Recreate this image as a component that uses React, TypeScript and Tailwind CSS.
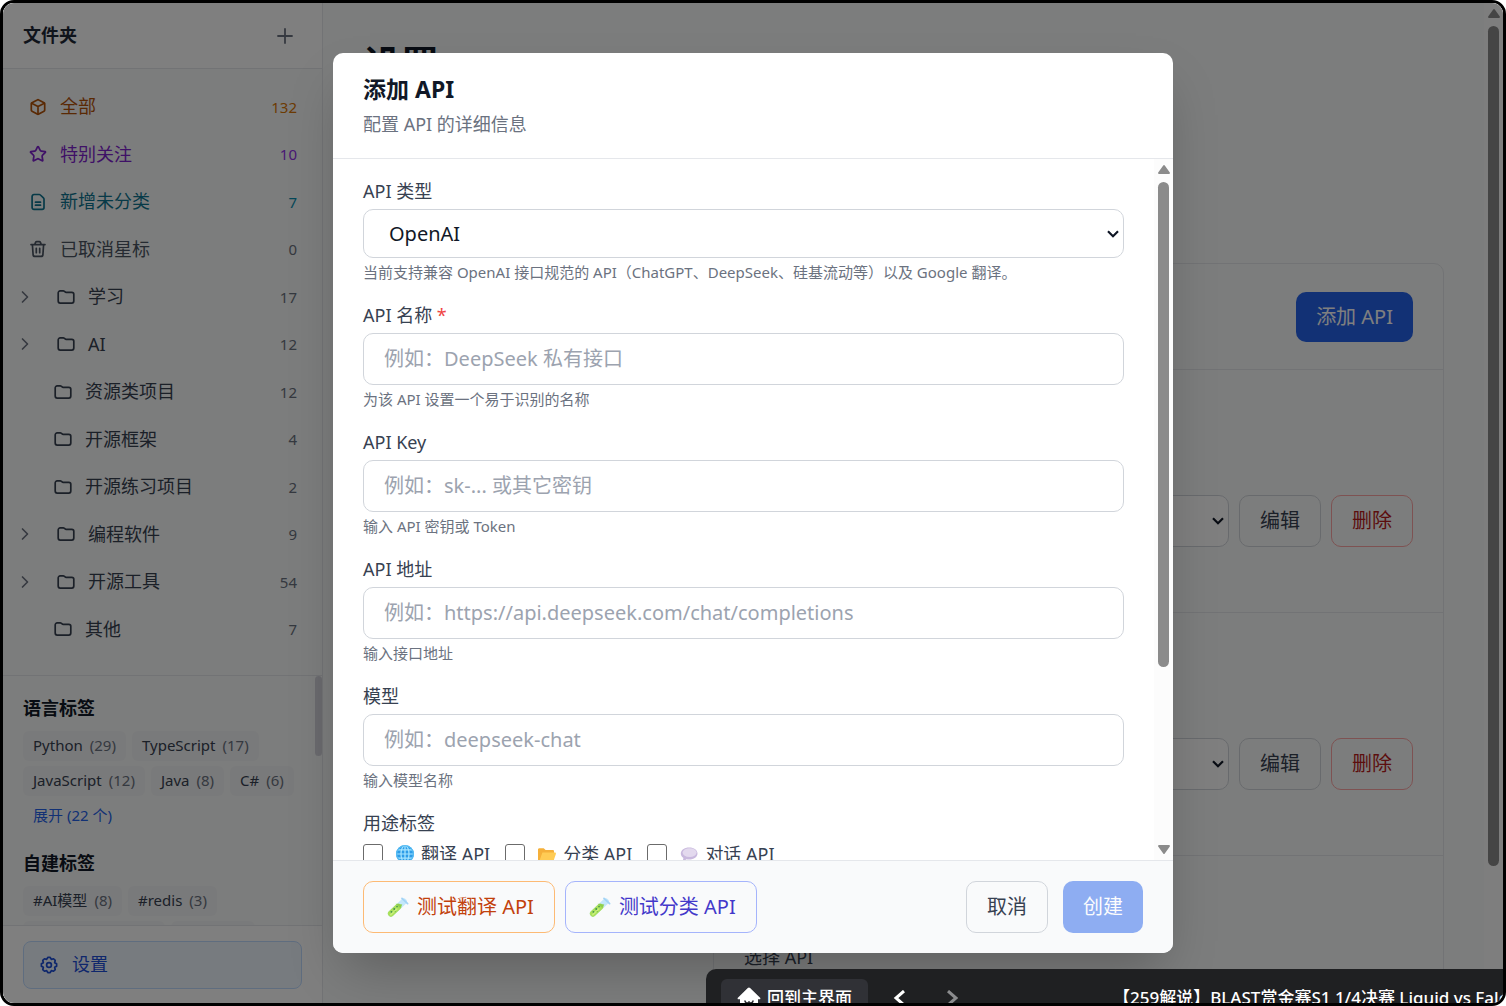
import { useState } from 'react';
import type { ReactNode } from 'react';
import { ChevronRight, Plus, Star } from 'lucide-react';

interface NavItem {
  name: string;
  count: number;
  kind: 'all' | 'star' | 'new' | 'trash' | 'parent' | 'leaf';
}

const NAV: NavItem[] = [
  { name: '全部', count: 132, kind: 'all' },
  { name: '特别关注', count: 10, kind: 'star' },
  { name: '新增未分类', count: 7, kind: 'new' },
  { name: '已取消星标', count: 0, kind: 'trash' },
  { name: '学习', count: 17, kind: 'parent' },
  { name: 'AI', count: 12, kind: 'parent' },
  { name: '资源类项目', count: 12, kind: 'leaf' },
  { name: '开源框架', count: 4, kind: 'leaf' },
  { name: '开源练习项目', count: 2, kind: 'leaf' },
  { name: '编程软件', count: 9, kind: 'parent' },
  { name: '开源工具', count: 54, kind: 'parent' },
  { name: '其他', count: 7, kind: 'leaf' },
];

const COLORS: Record<NavItem['kind'], { text: string; count: string }> = {
  all: { text: 'text-[#b45309]', count: 'text-[#d97706]' },
  star: { text: 'text-[#7e22ce]', count: 'text-[#9333ea]' },
  new: { text: 'text-[#0e7490]', count: 'text-[#0891b2]' },
  trash: { text: 'text-[#4b5563]', count: 'text-[#6b7280]' },
  parent: { text: 'text-[#374151]', count: 'text-[#6b7280]' },
  leaf: { text: 'text-[#374151]', count: 'text-[#6b7280]' },
};

const LANGUAGE_TAGS = [
  { name: 'Python', count: 29 },
  { name: 'TypeScript', count: 17 },
  { name: 'JavaScript', count: 12 },
  { name: 'Java', count: 8 },
  { name: 'C#', count: 6 },
];

const CUSTOM_TAGS = [
  { name: '#AI模型', count: 8 },
  { name: '#redis', count: 3 },
];

const FIELDS = [
  { id: 'name', label: 'API 名称', required: true, placeholder: '例如：DeepSeek 私有接口', hint: '为该 API 设置一个易于识别的名称' },
  { id: 'key', label: 'API Key', required: false, placeholder: '例如：sk-... 或其它密钥', hint: '输入 API 密钥或 Token' },
  { id: 'url', label: 'API 地址', required: false, placeholder: '例如：https://api.deepseek.com/chat/completions', hint: '输入接口地址' },
  { id: 'model', label: '模型', required: false, placeholder: '例如：deepseek-chat', hint: '输入模型名称' },
];

function Line({ children, className }: { children: ReactNode; className: string }) {
  return (
    <svg viewBox="0 0 18 18" fill="none" stroke="currentColor" strokeWidth="1.7" strokeLinecap="round" strokeLinejoin="round" className={className}>
      {children}
    </svg>
  );
}

function NavIcon({ kind }: { kind: NavItem['kind'] }) {
  const cls = 'size-[18px] shrink-0';
  if (kind === 'all') {
    return (
      <Line className={cls}>
        <path d="M8.2 1.900a1.600 1.600 0 0 1 1.600 0l5.200 2.800a1.300 1.300 0 0 1 .7 1.100v6.300a1.300 1.300 0 0 1-.7 1.100l-5.200 2.900a1.600 1.600 0 0 1-1.600 0L3 13.200a1.300 1.300 0 0 1-.7-1.100V5.800A1.300 1.300 0 0 1 3 4.700z" />
        <path d="M2.600 5.200 9 8.600l6.400-3.400M9 8.600v7.600" />
      </Line>
    );
  }
  if (kind === 'star') return <Star className={cls} strokeWidth={2.3} />;
  if (kind === 'new') {
    return (
      <Line className={cls}>
        <path d="M5 1.500h5.200c.5 0 .9.200 1.200.5l3 2.800c.4.400.6.800.6 1.300v8.400a1.900 1.900 0 0 1-1.900 1.900H5a1.900 1.900 0 0 1-1.900-1.900V3.400A1.900 1.900 0 0 1 5 1.500z" />
        <path d="M6.500 9.200h5M6.500 12.200h5" />
      </Line>
    );
  }
  if (kind === 'trash') {
    return (
      <Line className={cls}>
        <path d="M2 4.600h14M5.800 4.400l.8-2a1.300 1.300 0 0 1 1.200-.8h2.400c.5 0 1 .3 1.200.8l.8 2M3.400 4.800l.7 9.800a1.900 1.900 0 0 0 1.900 1.800h6a1.900 1.900 0 0 0 1.900-1.800l.7-9.800M7.300 8.300v4.400M10.700 8.300v4.400" />
      </Line>
    );
  }
  return (
    <Line className={cls}>
      <path d="M3.200 2.900h3c.5 0 .9.200 1.300.5l.6.500c.3.300.7.400 1.100.4h5.600a2 2 0 0 1 2 2v6.800a2 2 0 0 1-2 2H3.200a2 2 0 0 1-2-2V4.900a2 2 0 0 1 2-2z" />
    </Line>
  );
}

// Eight flat-topped teeth around a ring
const GEAR_POINTS = Array.from({ length: 8 }, (_, i) => {
  const at = (deg: number, r: number) => {
    const a = ((i * 45 + deg) * Math.PI) / 180;
    return `${(9 + r * Math.cos(a)).toFixed(2)},${(9 + r * Math.sin(a)).toFixed(2)}`;
  };
  return [at(-9, 7.7), at(9, 7.7), at(22.5, 6.1)].join(' ');
}).join(' ');

function GearIcon() {
  return (
    <Line className="size-[18px] shrink-0">
      <polygon points={GEAR_POINTS} />
      <circle cx="9" cy="9" r="2.400" />
    </Line>
  );
}

function TestTube() {
  return (
    <svg viewBox="0 0 28 24" className="h-6 w-7 shrink-0" fill="none" strokeLinecap="round">
      <path d="M7 18.600 19.800 6.600" stroke="#c3e7fa" strokeWidth="6.200" />
      <path d="M7 18.600 14.200 11.800" stroke="#a9e05a" strokeWidth="6.200" />
      <path d="m11.600 8.800 6.700.8-2 3.500z" fill="#8fcf4c" />
      <path d="m18 3.400 5.600 5.200" stroke="#a3d3f6" strokeWidth="1.800" />
      <path d="m6.800 19.600 6-5.600" stroke="#c9f07c" strokeWidth="1.600" />
      <circle cx="7.400" cy="16.800" r=".9" fill="#3f9150" />
      <circle cx="10.200" cy="14" r=".9" fill="#3f9150" />
      <circle cx="13" cy="11.600" r=".8" fill="#3f9150" />
      <circle cx="11.200" cy="16.600" r=".6" fill="#6cb545" />
    </svg>
  );
}

function Globe() {
  return (
    <svg viewBox="0 0 18 18" className="size-[18px] shrink-0" fill="none" stroke="#a8e6ff" strokeWidth="1.200">
      <circle cx="9" cy="9" r="9" fill="#2e9de8" stroke="none" />
      <ellipse cx="9" cy="9" rx="4" ry="8.400" />
      <path d="M9 .6v16.800M.6 9h16.800M2 4.900h14M2 13.100h14" />
      <circle cx="9" cy="9" r="8.400" stroke="#58bdf3" />
    </svg>
  );
}

function OpenFolder() {
  return (
    <svg viewBox="0 0 18 18" className="size-[18px] shrink-0">
      <path d="M0 4.600C0 3.800.6 3.200 1.400 3.200h4.300l1.900 1.800h7.200c.7 0 1.200.5 1.200 1.200V16H1.400C.6 16 0 15.400 0 14.600z" fill="#f5b03a" />
      <path d="M4.400 7.500h12.400c.9 0 1.400.7 1.100 1.500l-2.100 6.100c-.2.600-.7.900-1.300.9H1.400z" fill="#ffcc55" />
    </svg>
  );
}

function Bubble() {
  return (
    <svg viewBox="0 0 18 18" className="size-[18px] shrink-0">
      <path d="M9.200 2.600c4.800 0 8.300 2.600 8.300 6s-3.500 6-8.300 6c-1 0-2-.1-2.800-.3L2.600 17l.8-4C1.700 11.900.8 10.400.8 8.600c0-3.400 3.600-6 8.400-6z" fill="#c9b9de" />
      <ellipse cx="9.600" cy="7.600" rx="7" ry="4.300" fill="#e3d9ee" />
    </svg>
  );
}

const USAGES = [
  { id: 'translate', label: '翻译 API', icon: <Globe /> },
  { id: 'classify', label: '分类 API', icon: <OpenFolder /> },
  { id: 'chat', label: '对话 API', icon: <Bubble /> },
];

function SelectArrow() {
  return (
    <svg viewBox="0 0 12 8" className="pointer-events-none absolute top-1/2 right-[5px] h-2 w-3 -translate-y-1/2" fill="none" stroke="#111827" strokeWidth="2.200">
      <path d="m1 1.200 5 5 5-5" />
    </svg>
  );
}

function Scrollbar({ thumb }: { thumb: string }) {
  return (
    <div className="flex w-[19px] shrink-0 flex-col items-center justify-between bg-[#fcfcfc]" aria-hidden="true">
      <div className={`flex w-full flex-col items-center gap-2 pt-[6px] ${thumb}`}>
        <svg viewBox="0 0 12 9" className="h-[9px] w-3 shrink-0 fill-[#8b8b8b]">
          <path d="M5.200.600a1 1 0 0 1 1.600 0l5 6.900a.9.9 0 0 1-.8 1.400H1a.9.9 0 0 1-.8-1.400z" />
        </svg>
        <div className="w-[11px] flex-1 rounded-full bg-[#8b8b8b]" />
      </div>
      <svg viewBox="0 0 12 9" className="mb-[6px] h-[9px] w-3 shrink-0 rotate-180 fill-[#8b8b8b]">
        <path d="M5.200.600a1 1 0 0 1 1.600 0l5 6.900a.9.9 0 0 1-.8 1.400H1a.9.9 0 0 1-.8-1.400z" />
      </svg>
    </div>
  );
}

function Tag({ name, count }: { name: string; count: number }) {
  return (
    <button type="button" className="flex h-[30px] items-center gap-[7px] rounded-md bg-[#f3f4f6] px-[10px] pb-px text-[15px] text-[#374151]">
      {name}
      <span className="text-[#6b7280]">({count})</span>
    </button>
  );
}

function Sidebar() {
  return (
    <aside className="flex w-80 shrink-0 flex-col border-r border-[#e5e7eb] bg-[#f9fbfa]">
      <div className="flex h-[66px] shrink-0 items-center justify-between border-b border-[#e5e7eb] bg-white pr-[25px] pl-5">
        <h2 className="text-[18px] font-bold text-[#1f2937]">文件夹</h2>
        <button type="button" aria-label="新建文件夹" className="text-[#6b7280]">
          <Plus className="size-6" strokeWidth={1.8} />
        </button>
      </div>

      <nav className="flex min-h-0 flex-1 flex-col pt-[14px] pb-[22px]">
        {NAV.map((item) => (
          <button key={item.name} type="button" className={`flex flex-1 items-center pr-[25px] text-[18px] ${COLORS[item.kind].text} ${item.kind === 'leaf' ? 'pl-[51px]' : item.kind === 'parent' ? 'pl-3' : 'pl-[26px]'}`}>
            {item.kind === 'parent' && <ChevronRight className="mr-[22px] size-5 shrink-0 text-[#6b7280]" strokeWidth={2} />}
            <NavIcon kind={item.kind} />
            <span className="ml-[13px]">{item.name}</span>
            <span className={`ml-auto text-[15px] ${COLORS[item.kind].count}`}>{item.count}</span>
          </button>
        ))}
      </nav>

      <div className="flex h-[250px] shrink-0 overflow-hidden border-t border-[#e5e7eb]">
        <div className="min-w-0 flex-1 pt-5 pl-5">
          <h3 className="mb-[10px] text-[18px] leading-[25px] font-bold text-[#111827]">语言标签</h3>
          <div className="mb-5 flex flex-wrap gap-x-[6px] gap-y-[5px]">
            {LANGUAGE_TAGS.map((t) => (
              <Tag key={t.name} name={t.name} count={t.count} />
            ))}
            <button type="button" className="h-[30px] px-[10px] pb-px text-[15px] text-[#2563eb]">
              展开 (22 个)
            </button>
          </div>
          <h3 className="mb-[10px] text-[18px] leading-[25px] font-bold text-[#111827]">自建标签</h3>
          <div className="flex flex-wrap gap-x-[6px] gap-y-[5px]">
            {CUSTOM_TAGS.map((t) => (
              <Tag key={t.name} name={t.name} count={t.count} />
            ))}
            <div className="flex w-full gap-[6px]">
              <div className="h-[30px] w-[142px] rounded-md bg-[#f3f4f6]" />
              <div className="h-[30px] w-[84px] rounded-md bg-[#f3f4f6]" />
            </div>
          </div>
        </div>
        <div className="h-20 w-[7px] rounded-full bg-[#d5d5dd]" />
      </div>

      <div className="flex h-[78px] shrink-0 items-center border-t border-[#e5e7eb] bg-white px-5">
        <button type="button" className="flex h-12 w-full items-center gap-[14px] rounded-lg border border-[#bfdbfe] bg-[#eff6ff] px-4 text-[18px] text-[#1d4ed8]">
          <GearIcon />
          设置
        </button>
      </div>
    </aside>
  );
}

function ApiRow({ name }: { name: string }) {
  return (
    <div className="flex justify-end gap-[10px] border-b border-[#e5e7eb] px-[30px] pt-[125px] pb-[65px]">
      <div className="relative w-40">
        <select aria-label={name} className="h-[52px] w-full appearance-none rounded-[10px] border border-[#d1d5db] bg-white" />
        <SelectArrow />
      </div>
      <button type="button" className="h-[52px] rounded-[10px] border border-[#d1d5db] px-5 text-[20px] text-[#374151]">
        编辑
      </button>
      <button type="button" className="h-[52px] rounded-[10px] border border-[#fca5a5] px-5 text-[20px] text-[#b91c1c]">
        删除
      </button>
    </div>
  );
}

function SettingsPage() {
  return (
    <main className="flex min-w-0 flex-1 bg-[#f9fbfa]">
      <div className="min-w-0 flex-1 overflow-hidden px-10 pt-8">
        <h1 className="text-[38px] leading-[56px] font-bold text-[#111827]">设置</h1>
        <div className="mt-[172px] ml-[350px] h-screen rounded-[10px] border border-[#e5e7eb]">
          <div className="flex h-[106px] items-center justify-end border-b border-[#e5e7eb] px-[30px]">
            <button type="button" className="h-[50px] rounded-[10px] bg-[#2563eb] px-5 text-[20px] text-white">
              添加 API
            </button>
          </div>
          <ApiRow name="API 一" />
          <ApiRow name="API 二" />
          <p className="mt-[88px] px-[30px] text-[18px] leading-[27px] text-[#374151]">选择 API</p>
        </div>
      </div>
      <Scrollbar thumb="h-[calc(86%+3px)]" />
    </main>
  );
}

function AddApiDialog() {
  const [type, setType] = useState('openai');

  return (
    <div className="absolute inset-0 flex items-center justify-center bg-black/50">
      <div role="dialog" aria-labelledby="dialog-title" className="flex h-[90%] w-full max-w-[840px] flex-col overflow-hidden rounded-[10px] bg-white shadow-2xl">
        <div className="shrink-0 border-b border-[#e5e7eb] px-[30px] pt-5 pb-5">
          <h2 id="dialog-title" className="text-[23px] leading-8 font-bold text-[#111827]">
            添加 API
          </h2>
          <p className="mt-[6px] text-[18px] leading-[27px] text-[#6b7280]">配置 API 的详细信息</p>
        </div>

        <div className="flex min-h-0 flex-1">
          <form className="flex min-w-0 flex-1 flex-col gap-5 overflow-hidden px-[30px] pt-5">
            <div>
              <label htmlFor="type" className="mb-[5px] block text-[18px] leading-[25px] text-[#374151]">
                API 类型
              </label>
              <div className="relative">
                <select id="type" value={type} onChange={(e) => setType(e.target.value)} className="block h-[49px] w-full appearance-none rounded-[10px] border border-[#d1d5db] bg-white pl-[25px] text-[20px] text-[#111827]">
                  <option value="openai">OpenAI</option>
                </select>
                <SelectArrow />
              </div>
              <p className="mt-[3px] text-[15px] leading-[22px] text-[#6b7280]">
                当前支持兼容 OpenAI 接口规范的 API（ChatGPT、DeepSeek、硅基流动等）以及 Google 翻译。
              </p>
            </div>

            {FIELDS.map((f) => (
              <div key={f.id}>
                <label htmlFor={f.id} className="mb-[5px] block text-[18px] leading-[25px] text-[#374151]">
                  {f.label}
                  {f.required && <span className="text-[#ef4444]"> *</span>}
                </label>
                <input id={f.id} placeholder={f.placeholder} className="block h-[52px] w-full rounded-[10px] border border-[#d1d5db] px-5 pb-[2px] text-[20px] placeholder:text-[#9ca3af]" />
                <p className="mt-[3px] text-[15px] leading-[22px] text-[#6b7280]">{f.hint}</p>
              </div>
            ))}

            <fieldset className="shrink-0">
              <legend className="mb-[5px] text-[18px] leading-[25px] text-[#374151]">用途标签</legend>
              <div className="flex gap-[15px]">
                {USAGES.map((u) => (
                  <label key={u.id} htmlFor={u.id} className="flex h-[26px] items-center text-[18px] leading-[25px] text-[#374151]">
                    <input id={u.id} type="checkbox" className="mr-[13px] size-5 shrink-0 appearance-none rounded-[3px] border border-[#6b6b6b] bg-white" />
                    {u.icon}
                    <span className="ml-[7px]">{u.label}</span>
                  </label>
                ))}
              </div>
            </fieldset>
          </form>
          <Scrollbar thumb="h-[508px]" />
        </div>

        <div className="flex shrink-0 items-center border-t border-[#e5e7eb] bg-[#f9fafb] px-[30px] py-5">
          <div className="flex gap-[10px]">
            <button type="button" className="flex h-[52px] items-center gap-[5px] rounded-[10px] border border-[#fdba74] px-5 text-[20px] text-[#c2410c]">
              <TestTube />
              测试翻译 API
            </button>
            <button type="button" className="flex h-[52px] items-center gap-[5px] rounded-[10px] border border-[#a5b4fc] px-5 text-[20px] text-[#4338ca]">
              <TestTube />
              测试分类 API
            </button>
          </div>
          <div className="ml-auto flex gap-[15px]">
            <button type="button" className="h-[52px] rounded-[10px] border border-[#d1d5db] px-5 text-[20px] text-[#374151]">
              取消
            </button>
            <button type="button" disabled className="h-[52px] rounded-[10px] bg-[#2563eb] px-5 text-[20px] text-white opacity-50">
              创建
            </button>
          </div>
        </div>
      </div>
    </div>
  );
}

function PlayerBar() {
  return (
    <div className="absolute right-0 bottom-0 flex h-[34px] w-[797px] items-start overflow-hidden rounded-tl-[10px] bg-[#1f2022] pt-[10px] pl-[15px] text-[17px] leading-[38px] font-medium whitespace-nowrap text-white">
      <button type="button" className="flex h-[38px] shrink-0 items-center gap-[6px] rounded-md bg-[#303136] px-4">
        <svg viewBox="0 0 24 22" className="h-[22px] w-6" fill="white">
          <path d="M10.800 1a1.700 1.700 0 0 1 2.300 0l10 9.700c.6.600.2 1.600-.6 1.600H21v7.200c0 .8-.7 1.500-1.500 1.500h-15c-.8 0-1.500-.7-1.500-1.500v-7.200H1.500c-.8 0-1.200-1-.6-1.600z" />
          <path d="M8 14c.5 2.500 3.500 2.500 4 .5.500 2 3.500 2 4-.5" fill="none" stroke="#303136" strokeWidth="1.500" strokeLinecap="round" />
        </svg>
        回到主界面
      </button>
      <button type="button" aria-label="后退" className="ml-6 flex h-[38px] w-4 shrink-0 items-center">
        <svg viewBox="0 0 16 16" className="size-4" fill="none" stroke="white" strokeWidth="3">
          <path d="m12 1-8 7 8 7" />
        </svg>
      </button>
      <button type="button" aria-label="前进" className="ml-9 flex h-[38px] w-4 shrink-0 items-center">
        <svg viewBox="0 0 16 16" className="size-4" fill="none" stroke="#8b8c8e" strokeWidth="3">
          <path d="m4 1 8 7-8 7" />
        </svg>
      </button>
      <span className="ml-[153px]">【259解说】BLAST赏金赛S1 1/4决赛 Liquid vs Falcons</span>
    </div>
  );
}

export default function App() {
  return (
    <div className="relative flex h-screen overflow-hidden rounded-[14px] border-[3px] border-black font-['Noto_Sans','Noto_Sans_CJK_SC',sans-serif]">
      <Sidebar />
      <SettingsPage />
      <AddApiDialog />
      <PlayerBar />
    </div>
  );
}
